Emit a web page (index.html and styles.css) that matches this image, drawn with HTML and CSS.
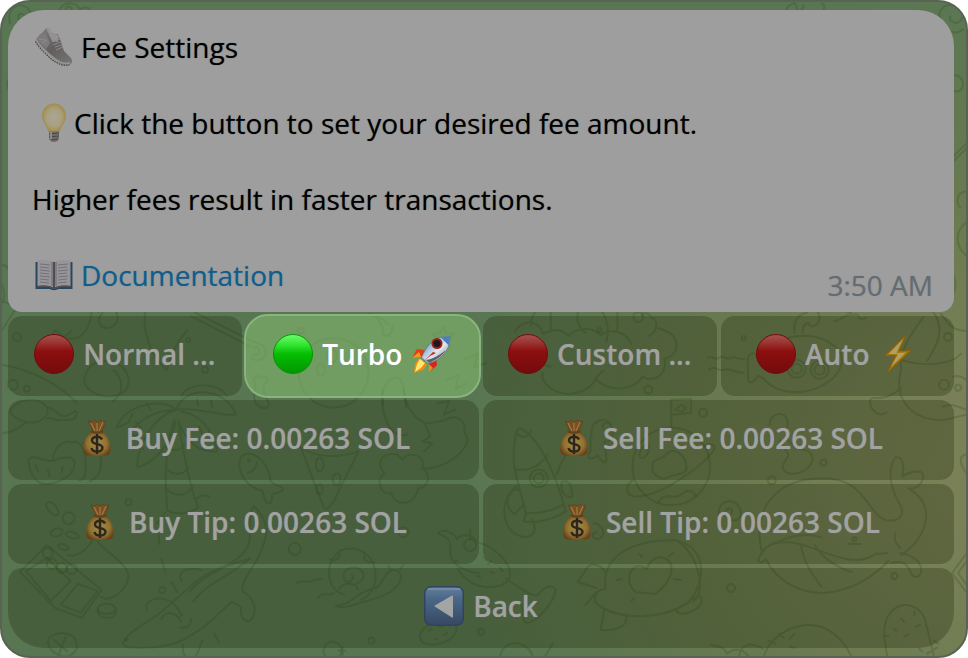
FILE: index.html
```html
<!DOCTYPE html>
<html lang="en">
<head>
    <meta charset="UTF-8">
    <meta name="viewport" content="width=device-width, initial-scale=1.0">
    <title>Fee Settings</title>
    <link rel="stylesheet" href="styles.css">
</head>
<body>
    <!-- Shared emoji symbols -->
    <svg class="symbols" aria-hidden="true">
        <defs>
            <linearGradient id="redFill" x1="0" y1="0" x2="0" y2="1">
                <stop offset="0" stop-color="#a45450"/>
                <stop offset=".25" stop-color="#982f2c"/>
                <stop offset=".42" stop-color="#8d0f10"/>
                <stop offset="1" stop-color="#730b0b"/>
            </linearGradient>
            <linearGradient id="greenFill" x1="0" y1="0" x2="0" y2="1">
                <stop offset="0" stop-color="#6bff69"/>
                <stop offset=".3" stop-color="#2be02a"/>
                <stop offset=".5" stop-color="#05bd03"/>
                <stop offset="1" stop-color="#009700"/>
            </linearGradient>
            <radialGradient id="bagFill" cx=".5" cy=".5" r=".55">
                <stop offset="0" stop-color="#a28a45"/>
                <stop offset=".65" stop-color="#937230"/>
                <stop offset="1" stop-color="#65421a"/>
            </radialGradient>
            <linearGradient id="backFill" x1="0" y1="0" x2="0" y2="1">
                <stop offset="0" stop-color="#637f9b"/>
                <stop offset=".3" stop-color="#4b6888"/>
                <stop offset="1" stop-color="#374863"/>
            </linearGradient>
            <radialGradient id="bulbFill" cx=".5" cy=".5" r=".55">
                <stop offset="0" stop-color="#aaa697"/>
                <stop offset=".6" stop-color="#a89f7d"/>
                <stop offset="1" stop-color="#a38a43"/>
            </radialGradient>
            <linearGradient id="shoeFill" x1="0" y1="0" x2="1" y2="1">
                <stop offset="0" stop-color="#858383"/>
                <stop offset=".5" stop-color="#625e5e"/>
                <stop offset="1" stop-color="#787575"/>
            </linearGradient>
            <linearGradient id="hullFill" x1="0" y1="0" x2="1" y2="1">
                <stop offset="0" stop-color="#3f77b4"/>
                <stop offset=".3" stop-color="#8fb5d8"/>
                <stop offset=".55" stop-color="#e3e7ec"/>
                <stop offset="1" stop-color="#60676f"/>
            </linearGradient>
        </defs>
        <symbol id="red" viewBox="0 0 40 40">
            <circle cx="20" cy="20" r="19.5" fill="url(#redFill)" stroke="#710d0d"/>
        </symbol>
        <symbol id="green" viewBox="0 0 40 40">
            <circle cx="20" cy="20" r="19.5" fill="url(#greenFill)" stroke="#079307"/>
        </symbol>
        <symbol id="bag" viewBox="0 0 40 40">
            <path d="M11 3l4 1 2-2 3 2 3-2 3 2 3-1-4 10H16z" fill="#76501f" stroke="#5f3d18" stroke-width=".6"/>
            <path d="M14 5l4 8M20 5v8M26 4l-4 9" stroke="#a17a48" stroke-width="1.2" fill="none"/>
            <path d="M15 13h10c5 4 8 10 8.600 16 .4 4-.6 7-2.600 8-6 1.500-17 1.500-22 0-3-1-3-5-2.600-8C7 23 10 17 15 13z" fill="url(#bagFill)"/>
            <path d="M14.500 13.500c3 1.500 8 1.500 11 0" stroke="#63401b" stroke-width="2" fill="none" stroke-linecap="round"/>
            <path d="M25 21.500c-.8-2-3-2.800-5-2.800-3 0-5 1.500-5 3.700 0 5 10.500 2.500 10.500 7.300 0 2.200-2.300 3.800-5.300 3.800-2.900 0-5.200-1.300-5.700-3.600M20 16v20" fill="none" stroke="#2b2720" stroke-width="2.4"/>
        </symbol>
        <symbol id="bolt" viewBox="0 0 40 40">
            <path d="M28 1L6.500 22l11-.5L9 39l24-22.500-12 .5z" fill="#a1740c" stroke="#8b5c08" stroke-width=".8"/>
            <path d="M25 5L10.500 20h9.500L13 33l15-14.500-9.500.5z" fill="#b0a062"/>
        </symbol>
        <symbol id="rocket" viewBox="0 0 40 40">
            <path d="M14 16L6 15 1 24l10-1z" fill="#e63c16"/>
            <path d="M8 18l-7 6 9-1z" fill="#f09a20"/>
            <path d="M25 24l1 7-8 8 0-10z" fill="#d82514"/>
            <path d="M18 30v9l4-5z" fill="#f08a20"/>
            <path d="M8 24l8 7-4 5-9 3 1-9z" fill="#ee8b12"/>
            <path d="M9 25l5 4-4 5-6 4 2-8z" fill="#ffe56b"/>
            <path d="M39 2.500c-7-.5-15 2-20 7-4 4.500-6.500 9-8.500 14l7 6c7-2 12-5 16-10 4-5 5.500-11 5.500-17z" fill="url(#hullFill)" stroke="#52647a" stroke-width=".6"/>
            <path d="M39 2.500c-3-.2-6 .2-9 1.200l7.500 7.500c1.200-3 1.500-6 1.500-8.700z" fill="#4b80bd"/>
            <path d="M35 16c-4 6-10 10-17 13l-3-3c7-1 14-5 20-10z" fill="#596069"/>
            <circle cx="26" cy="9.500" r="5.500" fill="#9f1c1c"/>
            <circle cx="26" cy="9.500" r="3.600" fill="#1e171d"/>
            <path d="M22 18L11 29l8-7 6-3z" fill="#c52218"/>
        </symbol>
        <symbol id="back" viewBox="0 0 40 40">
            <rect x=".75" y=".75" width="38.500" height="38.500" rx="6.500" fill="url(#backFill)" stroke="#304460" stroke-width="1.500"/>
            <path d="M4 3h32" stroke="#7891a8" stroke-width="1.500" stroke-linecap="round"/>
            <path d="M10 20L28 9.500q1-.5 1 1v20q0 1.500-1 1z" fill="#a2a4a6"/>
        </symbol>
        <symbol id="shoe" viewBox="0 0 40 40">
            <path d="M2 13C4 8 9 6 12 1l3 0 2 5 4 1 3 0 3 8 3 9 7 7c2 3 1 7-3 7-8 0-12-4-17-9C10 23 5 19 2 13z" fill="url(#shoeFill)"/>
            <path d="M12 1l3 0 2 5 4 1 4 1-1 7-6-1z" fill="#949292"/>
            <path d="M3 12l8-6 5 10-4 6z" fill="#7d7b7b"/>
            <path d="M5 12l6 1M8 16l5-3M18 15l8-3M19 18l8-3M21 20l7-2M22 23l7-3" stroke="#8d8b8b" stroke-width="1" fill="none"/>
            <path d="M2 13c4 7 10 11 15 16 5 4 11 9 19 7" stroke="#949292" stroke-width="2" fill="none"/>
            <path d="M1.500 14.500c4 7 9 11 14 16 6 5 12 9 20 7.500" stroke="#413f3f" stroke-width="1.200" stroke-dasharray="1.500 1" fill="none"/>
        </symbol>
        <symbol id="bulb" viewBox="0 0 40 40">
            <path d="M20 1C12.500 1 8.500 6.500 8.500 13c0 6 4.500 9 6 15.500h11c1.500-6.500 6-9.500 6-15.500C31.500 6.500 27.500 1 20 1z" fill="url(#bulbFill)" stroke="#9f8a4e" stroke-width=".8"/>
            <path d="M15 28.500h10V35c0 2-2 4-5 4s-5-2-5-4z" fill="#706d6b"/>
            <path d="M15 31l10-1M15 34l10-1M17 37l7-1" stroke="#494746" stroke-width="1.200"/>
            <path d="M17 29v7" stroke="#999" stroke-width="1.500"/>
        </symbol>
        <symbol id="book" viewBox="0 0 40 40">
            <path d="M1.500 7h37v27H24c-1 1.500-7 1.500-8 0H1.500z" fill="#27475f"/>
            <path d="M3.500 5.500c6-1 12-1 16.500 1.500 4.500-2.500 10.500-2.500 16.500-1.500V31c-6-.8-12-.5-16.500 1.800C15.500 30.500 9.500 30.200 3.500 31z" fill="#98959a"/>
            <path d="M3 32c6-1 12-.7 17 1.500 5-2.200 11-2.500 17-1.500" stroke="#54504f" stroke-width="1.200" fill="none"/>
            <path d="M20 7v26" stroke="#4a4648" stroke-width="1.800"/>
            <path d="M18 7v24M22 7v24" stroke="#78757a" stroke-width="1.500"/>
            <path d="M6 9l10 1M6 12l9 1M6 15l10 1M6 18l9 1M6 21l10 1M6 24l9 1M6 27l9 1M24 10l10-1M24 13l9-1M24 16l10-1M24 19l9-1M24 22l10-1M24 25l9-1M24 28l9-1" stroke="#6e6c72" stroke-width=".9"/>
        </symbol>
    </svg>

    <main class="chat">
        <!-- Wallpaper doodles -->
        <svg class="doodles" viewBox="0 0 968 658" preserveAspectRatio="xMidYMid slice" aria-hidden="true">
            <!-- top and side edges -->
            <path d="M8 22c-3-12 4-19 12-18 8 2 11 9 8 16M17 18c-2-5 2-7 5-4M58 9c2-9 18-10 20 0 3-4 10-4 11 1l5 1M64 9c0-5 6-5 6 0M7 78c-3 4-2 11 3 13M0 265c5-1 6 4 7 4M0 285c2 5 4 12 0 18M0 330l13-20M0 300l7 4"/>
            <path d="M787 9c4-8 11-9 11-3 0 5 6 4 7-2M823 2c4 2 3 6 0 9M945 22c-8-8-2-20 10-18 9 2 12 9 8 15-4 5-12 2-11-4M950 29c6 4 12 2 15-1M954 75c6-3 11 3 11 8s-4 9-9 7M954 157l14-14M954 162l14-14M968 191c-8 0-11 10-6 16M968 222c-11 8-11 24 0 33M955 274c3 5 3 16 0 20"/>
            <!-- sprout and fish, left -->
            <path d="M52 336c-2-6 3-7 5-3 4 6 10 3 12-2M60 338c15 3 27-1 30-26M97 312c2-7 18-5 19 4 1 10-11 16-17 9-3-4-2-9 2-12M144 312c-3 15 3 42 21 58 6-9 3-18 21-40M190 316l60 31M193 312l60 30c15 3 15 17 5 18-5 1-10-2-5-5 8 0 6-8 0-8M0 365c30 5 58 20 75 38M84 375c4-20 40-18 43 4 2 22-32 22-42 8-3-4-3-8-1-12zM112 370c10 9 11 24-1 32M180 396c8-14 36-14 46 0"/>
            <circle cx="15" cy="337" r="4"/><circle cx="11" cy="385" r="5"/><circle cx="25" cy="389" r="3"/><circle cx="187" cy="340" r="2"/><circle cx="204" cy="370" r="3"/>
            <!-- moon, star and sock -->
            <circle cx="333" cy="373" r="35"/><ellipse cx="331" cy="356" rx="5" ry="7"/><ellipse cx="320" cy="370" rx="4" ry="6"/>
            <circle cx="300" cy="331" r="3"/>
            <path d="M369 314c10 2 15 15 13 20 6 5 11-1 10-10M378 316l10 8M391 310l12-1M443 326l3 7 8 1-6 5 2 8-7-4-7 4 2-8-6-5 8-1zM383 405c-5-20 10-30 15-27 6 3 6 18 8 30M253 397c2-8 2-13 0-15-2-4 4-8 7-4 5-3 9 2 5 5-4 3-3 12 3 20 1 8-13 8-15-6z"/>
            <path d="M447 380l12-5-4 14 11-5M465 359l13-5-4 14 12-5M437 404l12-3-5 14 11-5"/>
            <!-- mushrooms -->
            <path d="M8 412c4-12 30-17 37-4 4 9-10 18-22 14-7-2-13-6-15-10zM45 408c8 0 11 7 15 8 8 3 14-9 15-3 0 8-9 8-14 7-6 3-9-3-16-1M0 434c9-1 15-4 24-11M27 460c5-7 15 4 25 1 9-3 19-6 21 2 0 13-15 21-29 22-12-1-18-15-17-25zM51 459c2-12 12-20 20-16M70 443c7-4 14 8 14 18 0 8 1 20-7 20M94 448c9 10 7 29-6 34M81 444c8-6 14-2 17 6M34 466l2 6M46 471l2 6M61 467l-1 6"/>
            <!-- palm tree -->
            <path d="M175 410c-15-13-52-5-60 18l12-5 4-9M175 410c-20 0-39 10-47 25l12 1M175 410c-22 6-40 35-39 58 15-4 36-24 38-46M175 410c8-25 49-23 60 5-15 2-39-8-60-5zM180 412c17 2 31 15 36 40-16 1-29-6-38-28M173 421c-9 20-10 61-7 90 9 5 22 4 31-3-9-22-15-55-20-87M165 447c7 6 14 4 18-2M166 470c7 7 17 5 21-2M166 490c7 8 20 7 25-2M164 513l-9 12M196 499c5-4 8-3 12-2M145 403l4 7M196 400l1 6M210 401l1 7M137 443l5 7M198 427l3 7M134 422l5 5"/>
            <!-- fish -->
            <path d="M240 457c11-9 27 5 30 25 5 6 12 4 12 8-3 5-9 3-11 5 0 4 1 9-4 9-5-2-3-9-6-13-14-2-27-19-21-34zM256 463c-2 9-6 10-9 10"/><circle cx="248" cy="461" r="1"/>
            <!-- watermelon slice -->
            <path d="M297 440l26 68c4 4 7-2 10-6l25-50M297 446c20 15 45 11 61 6"/>
            <ellipse cx="319" cy="465" rx="4" ry="7"/><ellipse cx="336" cy="480" rx="4" ry="6"/><ellipse cx="319" cy="490" rx="3" ry="5"/>
            <!-- dragon cloud -->
            <path d="M382 390c-2 20 5 50 25 45M403 390c3 22 14 30 23 34l18-3c11-8 23 0 20 11l4 8c-4 14-23 30-47 29M425 425l5 12-8 5 10 2-8 8M380 462c3-9 17-10 22-2 7-9 24-5 20 9 10 5 6 20-4 20-4 19-24 18-27 5-12 2-16-15-7-20-3-4-5-8-4-12z"/>
            <!-- treasure chest -->
            <path d="M18 573l27-27 55 45-20 28-27-10zM24 572l25 30 20-20-24-23zM76 585l-17 21 20 8 17-22zM95 540c2 9 33 24 32 38-2 14-18 26-28 20M66 556c9 3 24-7 27-22M46 503c4-2 10 5 11 11-3 6-11-2-13-8zM49 535c0-5 9-8 12-4-1 6-8 9-12 4zM64 535c1-6 13-1 13 4-3 1-11 0-13-4zM56 546c5-4 11 2 11 4-5 2-10 0-11-4z"/>
            <circle cx="67" cy="519" r="6"/><circle cx="46" cy="554" r="5"/><circle cx="50" cy="565" r="5"/><circle cx="60" cy="569" r="5"/><circle cx="70" cy="570" r="5"/><circle cx="127" cy="503" r="3"/><circle cx="294" cy="550" r="6"/>
            <ellipse cx="105" cy="610" rx="9" ry="5"/><path d="M96 611c0 11 19 11 19 0M62 658c-15-3-20-17-12-21 8-5 24-3 25 8 2 8-8 14-13 13M52 641l13 11M64 638l-8 20"/>
            <!-- crocodile -->
            <path d="M122 643c8-14 29-21 39-31 15-12 26-25 45-37 15-7 35-13 42-30 3-15-2-30 5-38 20 18 11 38 4 52-7 13-15 20-16 33 14 8 16 21 8 30-7 2-10-6-9-14l-9-5c-11 8-24 25-39 32-15 12-40 15-56 14-9 0-16-1-14-6zM146 612c-5-8 6-15 19-11 9 2 12 11 16 16M160 620c5-9 15-7 20 3M190 620c0 7-3 9-11 9M182 646c-1 7 0 11 6 15 8 1 9-10 13-19M180 582c-5-11 8-14 20-11M160 560l4 13M158 545l-1-10M170 583l6 10M188 593c17-19 42-29 61-33M192 603c14-20 40-27 57-44M213 635l5 9"/>
            <circle cx="161" cy="591" r="3"/><circle cx="125" cy="641" r="1"/>
            <!-- snail -->
            <path d="M343 595c-18-3-20-35-2-44 18-6 35 7 34 27 0 12-6 19-15 23M352 586c12-2 15-13 5-17-11-3-18 8-12 13 4 3 10-3 6-6M329 560c6 3 11-1 10-9M365 555c-4 5 2 10 9 8M338 590c6-7 16-7 20 1M335 607c17-1 20-14 37-17 10-1 12-17 19-19 10-1 12 7 7 14-7 11-22 14-35 18-8 3-22 7-28 4M391 572l-3-5M400 570l3-4M296 584c8-5 10 2 17-3l8-1M318 599c4-8 7 0 15-5"/>
            <circle cx="403" cy="533" r="5"/><circle cx="332" cy="652" r="9"/><path d="M338 652h7M342 648v8"/>
            <!-- ice cream -->
            <path d="M438 534c4-5 16-1 19 6 4-6 14-5 20 2M438 534c8 5 13 5 12 15 0 10 1 14 7 13M450 556c4 12 18 17 29 18M470 530v10"/><circle cx="470" cy="546" r="6"/>
            <path d="M458 570c4 8 14 17 28 18 16 1 26-5 24-16-3-13-20-26-30-28M506 580c14 8 26 19 32 16 10-13 18-8 18-4-4 14-19 31-28 32-8 1-2-14-8-20M484 558l3 4M490 573l4 1M477 577l3 1M500 569l3 3M488 565l3-3"/>
            <ellipse cx="438" cy="634" rx="19" ry="11" transform="rotate(-18 438 634)"/><path d="M428 633l3-3M438 627l4 1M444 636l3-2M434 640l3 1"/>
            <circle cx="481" cy="633" r="3"/><circle cx="371" cy="642" r="3"/>
            <path d="M500 658c4-19 28-17 33 0M545 658l8-13"/>
            <!-- cake tree -->
            <path d="M515 332c8-15 25-11 28 2 9-4 17-7 26 2 6-7 22-11 32-1 9-7 26-4 31 9M531 325c1-17 15-20 20-14v21M586 333c-11-7-13-28 5-28 15 3 20 20 16 37M618 330v-18M650 336c10-6 8-18 2-18-2-6-9-6-10-2M543 373c-3 12 15 21 24 21 13 1 25-6 29-15 15 16 41 10 47-2 15 7 25-5 22-18 15-3 16-21 4-27l-10-4M535 350c4 10 9 16 16 17M596 379c3-3 4-6 8-8"/>
            <circle cx="639" cy="317" r="5"/><circle cx="600" cy="330" r="2"/><circle cx="649" cy="390" r="4"/><circle cx="745" cy="338" r="2"/>
            <path d="M709 358c4-5 5 4 11 0s7 3 12 0 9 3 13 1M710 370c6-6 10 3 15 0s10 3 19 3"/>
            <!-- submarine -->
            <path d="M764 356c15-22 50-27 72-10 12 9 9 25-6 36-20 14-50 15-66-4l-5-2c-4 8-10 9-10 2v-20c2-6 8-7 10 1zM796 333c-2-13 4-19 12-20 7-9 13-1 13 5-2 10-10 10-11 5-5 0-6 4-6 10"/>
            <circle cx="798" cy="369" r="9"/><circle cx="798" cy="369" r="5"/><circle cx="821" cy="370" r="9"/><circle cx="821" cy="370" r="5"/>
            <path d="M836 321c8 0 11-9 19-6 8-4 1 7 13 3M853 313l-6-2"/>
            <!-- duck -->
            <path d="M925 317c-14 20-25 36-22 52-10 35 17 54 44 51l21-5M888 413c-12 8-22-14-13-15 10 1 18-1 28-10M903 360c18 6 48 7 60-6M935 312c15 20-1 40-6 49M955 377c8-3 11 2 13 3M945 407c7-4 15 0 23 3M943 314c8 10 10 16 25 17"/>
            <circle cx="950" cy="337" r="4"/><circle cx="946" cy="385" r="5"/><circle cx="960" cy="388" r="3"/>
            <!-- rocket -->
            <path d="M515 471c-3-17 0-50 8-41 17 10 32 43 41 75-12 8-26 9-38 9zM516 432c6 8 13 6 15-1M516 470c13 2 24-3 32-15M526 514l-2 8c13 3 32-3 42-10l-2-7M516 487c-10 9-12 21-1 28l8-9M532 520c12 20-15 25-25 5-8-20 5-40 13-34M557 475c6-18 18-35 30-32M562 483c6-4 12 4 10 15-9-1-11-7-10-15"/>
            <circle cx="539" cy="479" r="9"/><circle cx="539" cy="479" r="5"/>
            <path d="M592 436c-3-18 21-23 21-2 1 6-5 9-8 8l2 18c-2 8-8-3-9-4-7 6-13 2-7-4v-15M604 429c-4-6 7-8 8-3"/>
            <!-- planet -->
            <circle cx="672" cy="467" r="39"/>
            <path d="M653 467c0-9 11-7 14-12 8-9 19 1 20 11 3 11-14 8-18 12-7 4-17-3-16-11zM633 481c-10 8-4 18 7 16 27-3 63-31 74-45 4-7-2-10-9-5M640 455c4-12 12-16 9-3-2 7-9 9-9 3M659 503c7-12 17-1 23-8 6-6 13-3 15 2M672 428v-28l20-1v14l-20 2M676 410l6-5 5 3-4 4-7-2"/>
            <circle cx="704" cy="413" r="4"/><circle cx="773" cy="481" r="4"/><circle cx="825" cy="463" r="3"/>
            <!-- worm -->
            <path d="M771 425c0-14 18-14 18-2-1 13-3 17 6 23 4 7 17 0 19 13-1 9-11 17-24 15-11-4-5-10-2-15 5-5-4-10-7-18M720 517c-4-18 21-21 22-3 0 11-17 9-16-1 4-7 10-3 6 2M594 524c6 0 13 8 8 14-7 6-13-4-5-5"/>
            <!-- whale -->
            <path d="M763 553c-10-41 12-74 60-74 46-1 45 37 65 42 13 2 20-5 13-17-8-14-13-32-4-46 10-2 8 15 7 19 8-5 22-8 21 0-1 11-11 13-15 12 29 16 20 48-7 67M764 553c5-12 26-11 38-8 31 10 54 24 75 10l12-1M764 553c-9 10-2 14 3 7 10 21 32 34 58 34 30-2 53-19 65-32M802 545c3 18 11 30 21 43M816 546c7 12 21 22 37 27M774 545c19-10 35-11 49-7M902 554c12 2 22 8 21 19-3 7-9 7-12-3-5-8-10-8-18-6M902 549c-4-4-7-8-5-15M850 545h12"/>
            <circle cx="856" cy="540" r="2"/><circle cx="896" cy="577" r="3"/><circle cx="732" cy="589" r="4"/>
            <!-- turtle -->
            <path d="M606 590c-4-31 22-49 70-49 34 8 30 41 14 62-27 18-70 20-94 1-2-9 3-14 10-14zM679 542c20 15 29 48 15 61M606 573c-6-9-16-10-20-2l-8 12 19 6M596 594l-10 12M605 610l-4 21c12 2 27-2 26-13M694 600c11-8 11 6 3 10-7 5-16 7-20 2M656 595l-20-2c-14-13-3-33 12-23 1-11 18-18 24-4 2 14-8 23-16 29zM670 557l4-3M675 580l7 1M632 602l3-3M617 581l5-1M643 558l-3-3"/>
            <!-- seal and cactus -->
            <path d="M765 658c8-30 63-53 88 0M712 646c6 3 12 0 16 9 7-5 14-7 22 3M740 658c3-17 18-12 24-8M770 642l6 3M780 635l5 4M791 640l5-5M791 648l6 1M889 658c-3-16-6-34 3-44 12-15 34-7 36 12l8 32M903 620l3 3M916 613v4M895 630l3 2M922 626l-4 2M906 638l4-2M921 650l3 3M890 637l-5 1M936 642l4 3M929 655l10-6"/>
            <path d="M968 555l-14 19 14 19M968 563l-8 11 8 11M968 455c-8 1-6 11 0 18"/>
        </svg>

        <section class="message">
            <p class="line"><svg class="emoji"><use href="#shoe"/></svg>Fee Settings</p>
            <p class="line line-tight"><svg class="emoji"><use href="#bulb"/></svg>Click the button to set your desired fee amount.</p>
            <p class="line">Higher fees result in faster transactions.</p>
            <div class="footer">
                <a class="line" href="#docs"><svg class="emoji"><use href="#book"/></svg>Documentation</a>
                <time class="time" datetime="03:50">3:50 AM</time>
            </div>
        </section>

        <div class="keyboard">
            <div class="row">
                <button type="button" class="key"><svg class="icon"><use href="#red"/></svg>Normal ...</button>
                <button type="button" class="key key-active"><svg class="icon"><use href="#green"/></svg>Turbo <svg class="icon"><use href="#rocket"/></svg></button>
                <button type="button" class="key"><svg class="icon"><use href="#red"/></svg>Custom ...</button>
                <button type="button" class="key"><svg class="icon"><use href="#red"/></svg>Auto <svg class="icon"><use href="#bolt"/></svg></button>
            </div>
            <div class="row">
                <button type="button" class="key"><svg class="icon"><use href="#bag"/></svg>Buy Fee: 0.00263 SOL</button>
                <button type="button" class="key"><svg class="icon"><use href="#bag"/></svg>Sell Fee: 0.00263 SOL</button>
            </div>
            <div class="row">
                <button type="button" class="key"><svg class="icon"><use href="#bag"/></svg>Buy Tip: 0.00263 SOL</button>
                <button type="button" class="key"><svg class="icon"><use href="#bag"/></svg>Sell Tip: 0.00263 SOL</button>
            </div>
            <div class="row">
                <button type="button" class="key key-last"><svg class="icon"><use href="#back"/></svg>Back</button>
            </div>
        </div>
    </main>
</body>
</html>
```

FILE: styles.css
```css
* {
    box-sizing: border-box;
}

body {
    margin: 0;
    background-color: #fff;
    font-family: "Open Sans", "Noto Sans", sans-serif;
    font-size: 28px;
    line-height: 38px;
}

.symbols {
    position: absolute;
    width: 0;
    height: 0;
}

/* Chat wallpaper */
.chat {
    position: relative;
    min-height: 100vh;
    padding: 8px 12px 8px 6px;
    border: 2px solid #586354;
    border-radius: 30px;
    overflow: hidden;
    background: radial-gradient(ellipse 56% 76% at 104% 72%, #7c8157 0%, #777f56 25%, #67794f 60%, #597653 100%);
    background-color: #597653;
}

.doodles {
    position: absolute;
    top: 0;
    left: 0;
    width: 100%;
    height: 100%;
    fill: none;
    stroke: rgba(40, 75, 25, 0.25);
    stroke-width: 2;
    stroke-linecap: round;
    stroke-linejoin: round;
}

/* Message bubble */
.message {
    position: relative;
    padding: 18px 21px 8px 24px;
    border-radius: 36px 36px 14px 14px;
    background-color: #9e9e9e;
    color: #000;
    font-weight: 500;
    text-shadow: 0 0 1px rgba(0, 0, 0, 0.5);
}

.line {
    display: flex;
    align-items: center;
    min-height: 38px;
    margin: 0 0 38px;
}

.emoji {
    flex: none;
    width: 40px;
    height: 40px;
    margin: -1px 7px -1px 2px;
}

.line-tight .emoji {
    margin-right: 0;
}

.footer {
    display: flex;
    justify-content: space-between;
    align-items: flex-start;
}

.footer .line {
    margin: 0;
    color: #0f5d8c;
    text-decoration: none;
    text-shadow: 0 0 1px rgba(15, 93, 140, 0.5);
}

.time {
    margin-top: 10px;
    color: #646c72;
    text-shadow: 0 0 1px rgba(100, 108, 114, 0.5);
}

/* Inline keyboard */
.keyboard {
    position: relative;
    display: flex;
    flex-direction: column;
    gap: 4px;
    margin-top: 4px;
}

.row {
    display: flex;
    gap: 4px;
}

.key {
    flex: 1 1 0;
    display: flex;
    justify-content: center;
    align-items: center;
    gap: 9px;
    min-width: 0;
    height: 80px;
    padding: 0 0 5px;
    border: 0;
    border-radius: 14px;
    background-color: rgba(34, 46, 14, 0.31);
    color: #a1a2a1;
    font: inherit;
    font-weight: 600;
    text-shadow: 0 0 1px rgba(161, 162, 161, 0.5);
    white-space: nowrap;
    cursor: pointer;
}

.key-active {
    height: 84px;
    margin: -2px;
    border: 2px solid #88b47d;
    border-radius: 24px;
    background-color: rgba(135, 190, 110, 0.54);
    color: #fff;
}

.key-last {
    border-radius: 14px 14px 36px 36px;
}

.icon {
    flex: none;
    width: 40px;
    height: 40px;
}
```
